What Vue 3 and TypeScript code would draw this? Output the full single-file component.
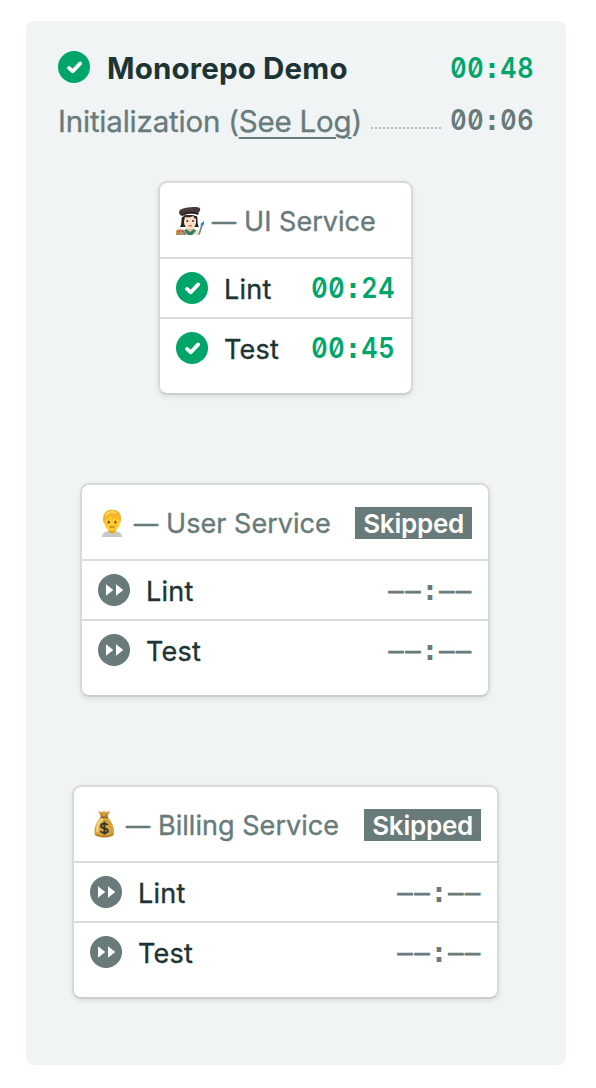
<script setup lang="ts">
type Status = 'passed' | 'skipped'
interface Service {
  id: 'ui' | 'user' | 'billing'
  name: string
  status: Status
  jobs: { name: string; time: string }[]
}

const services: Service[] = [
  { id: 'ui', name: 'UI Service', status: 'passed', jobs: [{ name: 'Lint', time: '00:24' }, { name: 'Test', time: '00:45' }] },
  { id: 'user', name: 'User Service', status: 'skipped', jobs: [{ name: 'Lint', time: '——:——' }, { name: 'Test', time: '——:——' }] },
  { id: 'billing', name: 'Billing Service', status: 'skipped', jobs: [{ name: 'Lint', time: '——:——' }, { name: 'Test', time: '——:——' }] },
]

const glyphClass = (c: string) => (c === '—' ? 'bar' : c === ':' ? 'colon' : 'digit')
</script>

<template>
  <main class="panel">
    <header class="summary">
      <svg class="icon" viewBox="0 0 32 32">
        <circle cx="16" cy="16" r="16" fill="#00a56a" />
        <path d="M11 16.9 14.8 20.3 22.2 12.4" fill="none" stroke="#fff" stroke-width="3.8" stroke-linecap="round" stroke-linejoin="round" />
      </svg>
      <h1 class="title">Monorepo Demo</h1>
      <span class="time passed"><i v-for="(c, i) in '00:48'" :key="i" :class="glyphClass(c)">{{ c }}</i></span>
    </header>
    <div class="init">
      <span class="init-label">Initialization (<a class="log">See Log</a>)</span>
      <span class="leader"></span>
      <span class="time"><i v-for="(c, i) in '00:06'" :key="i" :class="glyphClass(c)">{{ c }}</i></span>
    </div>

    <section v-for="s in services" :key="s.id" class="card" :class="s.id">
      <div class="card-head">
        <svg v-if="s.id === 'ui'" class="emoji" viewBox="0 0 28 28">
          <path d="M6 10C5 14 6 17 4 20H10L18 20H23C21 17 22 13 21 9Z" fill="#292426" />
          <path d="M5 28C5 23 9 21 14 21S23 23 23 28Z" fill="#e9e3d4" />
          <path d="M11 19H17V24L14 26 11 24Z" fill="#e8bd9e" />
          <path d="M10 22 14 25 18 22 20 24 16 28H12L8 24Z" fill="#32805d" />
          <path d="M8 10C8 7 20 7 20 10V15C20 19 17 22 14 22S8 19 8 15Z" fill="#fae0c5" />
          <path d="M7 11C7 7 11 8 14 8S20 8 21 11L19 12 17 9C14 11 11 10 9 10L8 14Z" fill="#332928" />
          <path d="M3 5C3 1 13 0 20 0 25 0 25 3 23 5L22 8C16 5 10 7 6 9 4 8 3 7 3 5Z" fill="#493b3c" />
          <path d="M6 8C10 5 17 5 22 7" fill="none" stroke="#272123" stroke-width="1.6" />
          <circle cx="11.3" cy="14" r="1" fill="#4a302a" /><circle cx="17" cy="14" r="1" fill="#4a302a" />
          <path d="M12.4 18.4Q14.2 19.3 16 18.4" fill="none" stroke="#c56358" stroke-width="1.1" />
          <path d="M0 24C1 21 9 22 10 25 12 27 10 28 8 28H0Z" fill="#c89157" />
          <circle cx="3" cy="24.5" r="1.1" fill="#e94335" /><circle cx="6.5" cy="24.3" r="1.1" fill="#8b42b7" /><circle cx="2" cy="27" r="1" fill="#38a852" /><circle cx="8.5" cy="26.5" r="1" fill="#3478d2" />
          <path d="M26 18 23 27.5" stroke="#777d82" stroke-width="1.6" />
          <path d="M27.9 14 25 16.5 24.6 18.6 26.8 19 28 17Z" fill="#2589d8" />
        </svg>
        <svg v-else-if="s.id === 'user'" class="emoji" viewBox="0 0 28 28">
          <path d="M4 28C4 24 7 23 10 22H18C21 23 24 24 24 28Z" fill="#c6c8ca" />
          <path d="M10.5 18H17.5V23Q14 26 10.5 23Z" fill="#e9a91d" />
          <path d="M6 12C5 4 9 1 14 1S23 4 22 12C22 19 18 22 14 22S6 18 6 12Z" fill="#ffc92c" />
          <path d="M5.5 14C3.5 5 8 .8 14 .8 21 .8 24.5 5 22.5 14L20.5 9.5C17 10.5 14 8 12 7 11 9.5 8 9 7 12Z" fill="#f5b52b" />
          <path d="M8 6C10 2.5 15 2 18 4" fill="none" stroke="#ffda65" stroke-width="1.8" />
          <ellipse cx="10.7" cy="13.2" rx="1" ry="1.4" fill="#60431c" /><ellipse cx="17.4" cy="13.2" rx="1" ry="1.4" fill="#60431c" />
          <path d="M12.2 18H16" stroke="#a95c20" stroke-width="1.2" stroke-linecap="round" />
        </svg>
        <svg v-else class="emoji" viewBox="0 0 28 28">
          <path d="M8 0 11 1 14 .3 17 1 20 0 17.5 6H11Z" fill="#d5a140" />
          <path d="M11 2.5 13 6M17 2.5 15 6" stroke="#a97429" stroke-width="1" />
          <path d="M11 6H17.5C21 10 24.5 15 24 22 24 25.5 20 26.5 14.5 26.5S4.5 25.5 4.5 22C4 15 7.5 10 11 6Z" fill="#d7a43c" />
          <path d="M7.5 20C6.5 15 9 11 12 8.5" fill="none" stroke="#f5d578" stroke-width="2.4" stroke-linecap="round" />
          <path d="M5.5 23.5Q14 27.5 23 23.5" fill="none" stroke="#ae7427" stroke-width="1.3" />
          <path d="M10.5 6.3H18" stroke="#8e602a" stroke-width="1.5" />
          <path d="M17.7 14C16.5 12 11 12 11 15 11 18.2 17.9 16.6 17.9 19.8 17.9 22.6 12 22.4 10.5 20.2M14.4 10.6V23.8" fill="none" stroke="#35352c" stroke-width="1.9" />
        </svg>
        <span class="dash">—</span>
        <span class="name">{{ s.name }}</span>
        <span v-if="s.status === 'skipped'" class="badge">Skipped</span>
      </div>
      <div v-for="j in s.jobs" :key="j.name" class="job">
        <svg class="icon" viewBox="0 0 32 32">
          <template v-if="s.status === 'passed'">
            <circle cx="16" cy="16" r="16" fill="#00a56a" />
            <path d="M11 16.9 14.8 20.3 22.2 12.4" fill="none" stroke="#fff" stroke-width="3.8" stroke-linecap="round" stroke-linejoin="round" />
          </template>
          <template v-else>
            <circle cx="16" cy="16" r="16" fill="#687a7a" />
            <path d="M8 10.2 15.3 16 8 21.8ZM18 10.2 25.3 16 18 21.8Z" fill="#fff" />
          </template>
        </svg>
        <span class="job-name">{{ j.name }}</span>
        <span class="time" :class="s.status"><i v-for="(c, i) in j.time" :key="i" :class="glyphClass(c)">{{ c }}</i></span>
      </div>
    </section>
  </main>
</template>

<style>
body { margin: 0; background: #fff; }
</style>

<style scoped>
.panel {
  box-sizing: border-box;
  width: 540px;
  height: 1044px;
  margin: 21px 0 0 26px;
  padding: 30px 32px 0;
  border-radius: 8px;
  background: #f0f4f5;
  color: #1e3434;
  font-family: Inter, sans-serif;
  font-size: 27px;
  line-height: 32px;
  display: flex;
  flex-direction: column;
  white-space: nowrap;
}
.icon { width: 32px; height: 32px; flex: none; display: block; }
.summary { display: flex; height: 32px; flex: none; }
.title { margin: 1px 0 0 17px; font-size: 29.5px; line-height: 32px; font-weight: 700; letter-spacing: 0.17px; }
.time { display: flex; margin-left: auto; color: #687a7a; }
.summary .time, .init .time { margin-top: 1px; }
.time i { display: flex; justify-content: center; width: 16.86px; font-style: normal; }
.time .digit { font-size: 29px; font-weight: 600; font-feature-settings: "zero", "tnum"; transform: scaleX(0.87); }
.time .colon { margin-top: 1px; font-family: "DejaVu Sans Mono", monospace; font-weight: 700; font-size: 28px; }
.time .bar { margin-top: 1px; font-family: "DejaVu Sans Mono", monospace; font-size: 25px; -webkit-text-stroke: 0.8px currentColor; }
.time.passed { color: #00a56a; }
.init { display: flex; height: 32px; flex: none; margin-top: 20px; color: #687a7a; }
.init-label { margin-top: 2px; font-size: 29.5px; letter-spacing: -0.2px; -webkit-text-stroke: 0.3px currentColor; }
.log { text-decoration: underline; text-decoration-thickness: 2px; text-underline-offset: 5px; }
.leader { width: 70px; height: 2px; margin: 24px 0 0 9px; background: repeating-linear-gradient(90deg, #b4bbbb 0 2px, transparent 2px 4px); }
.card {
  box-sizing: border-box;
  flex: none;
  height: 214px;
  margin-bottom: 88px;
  border: 2px solid #d6dadb;
  border-bottom-color: #c9cdce;
  border-radius: 9px;
  background: #fff;
  box-shadow: 0 2px 5px rgba(30, 52, 52, 0.1);
}
.card.ui { width: 255px; margin-top: 46px; margin-left: 100px; }
.card.user { width: 410px; margin-left: 22px; }
.card.billing { width: 427px; margin-left: 14px; }
.card-head { box-sizing: border-box; height: 74px; padding: 24px 16px 0; display: flex; color: #687a7a; }
.emoji { width: 28px; height: 28px; flex: none; }
.dash { width: 24px; margin: -1px 8px 0 8px; font-size: 24px; -webkit-text-stroke: 0.6px currentColor; }
.name { margin-top: -1px; letter-spacing: 0.04px; -webkit-text-stroke: 0.35px currentColor; }
.badge { height: 32px; margin: -2px 0 0 auto; padding: 0 8px; background: #687a7a; color: #fff; font-size: 26px; font-weight: 600; letter-spacing: -0.25px; line-height: 33px; }
.job { box-sizing: border-box; height: 60px; padding: 13px 16px 0; display: flex; border-top: 2px solid #d8dadb; }
.job-name { margin: 2px 0 0 16px; letter-spacing: 0.25px; -webkit-text-stroke: 0.35px currentColor; }
</style>
